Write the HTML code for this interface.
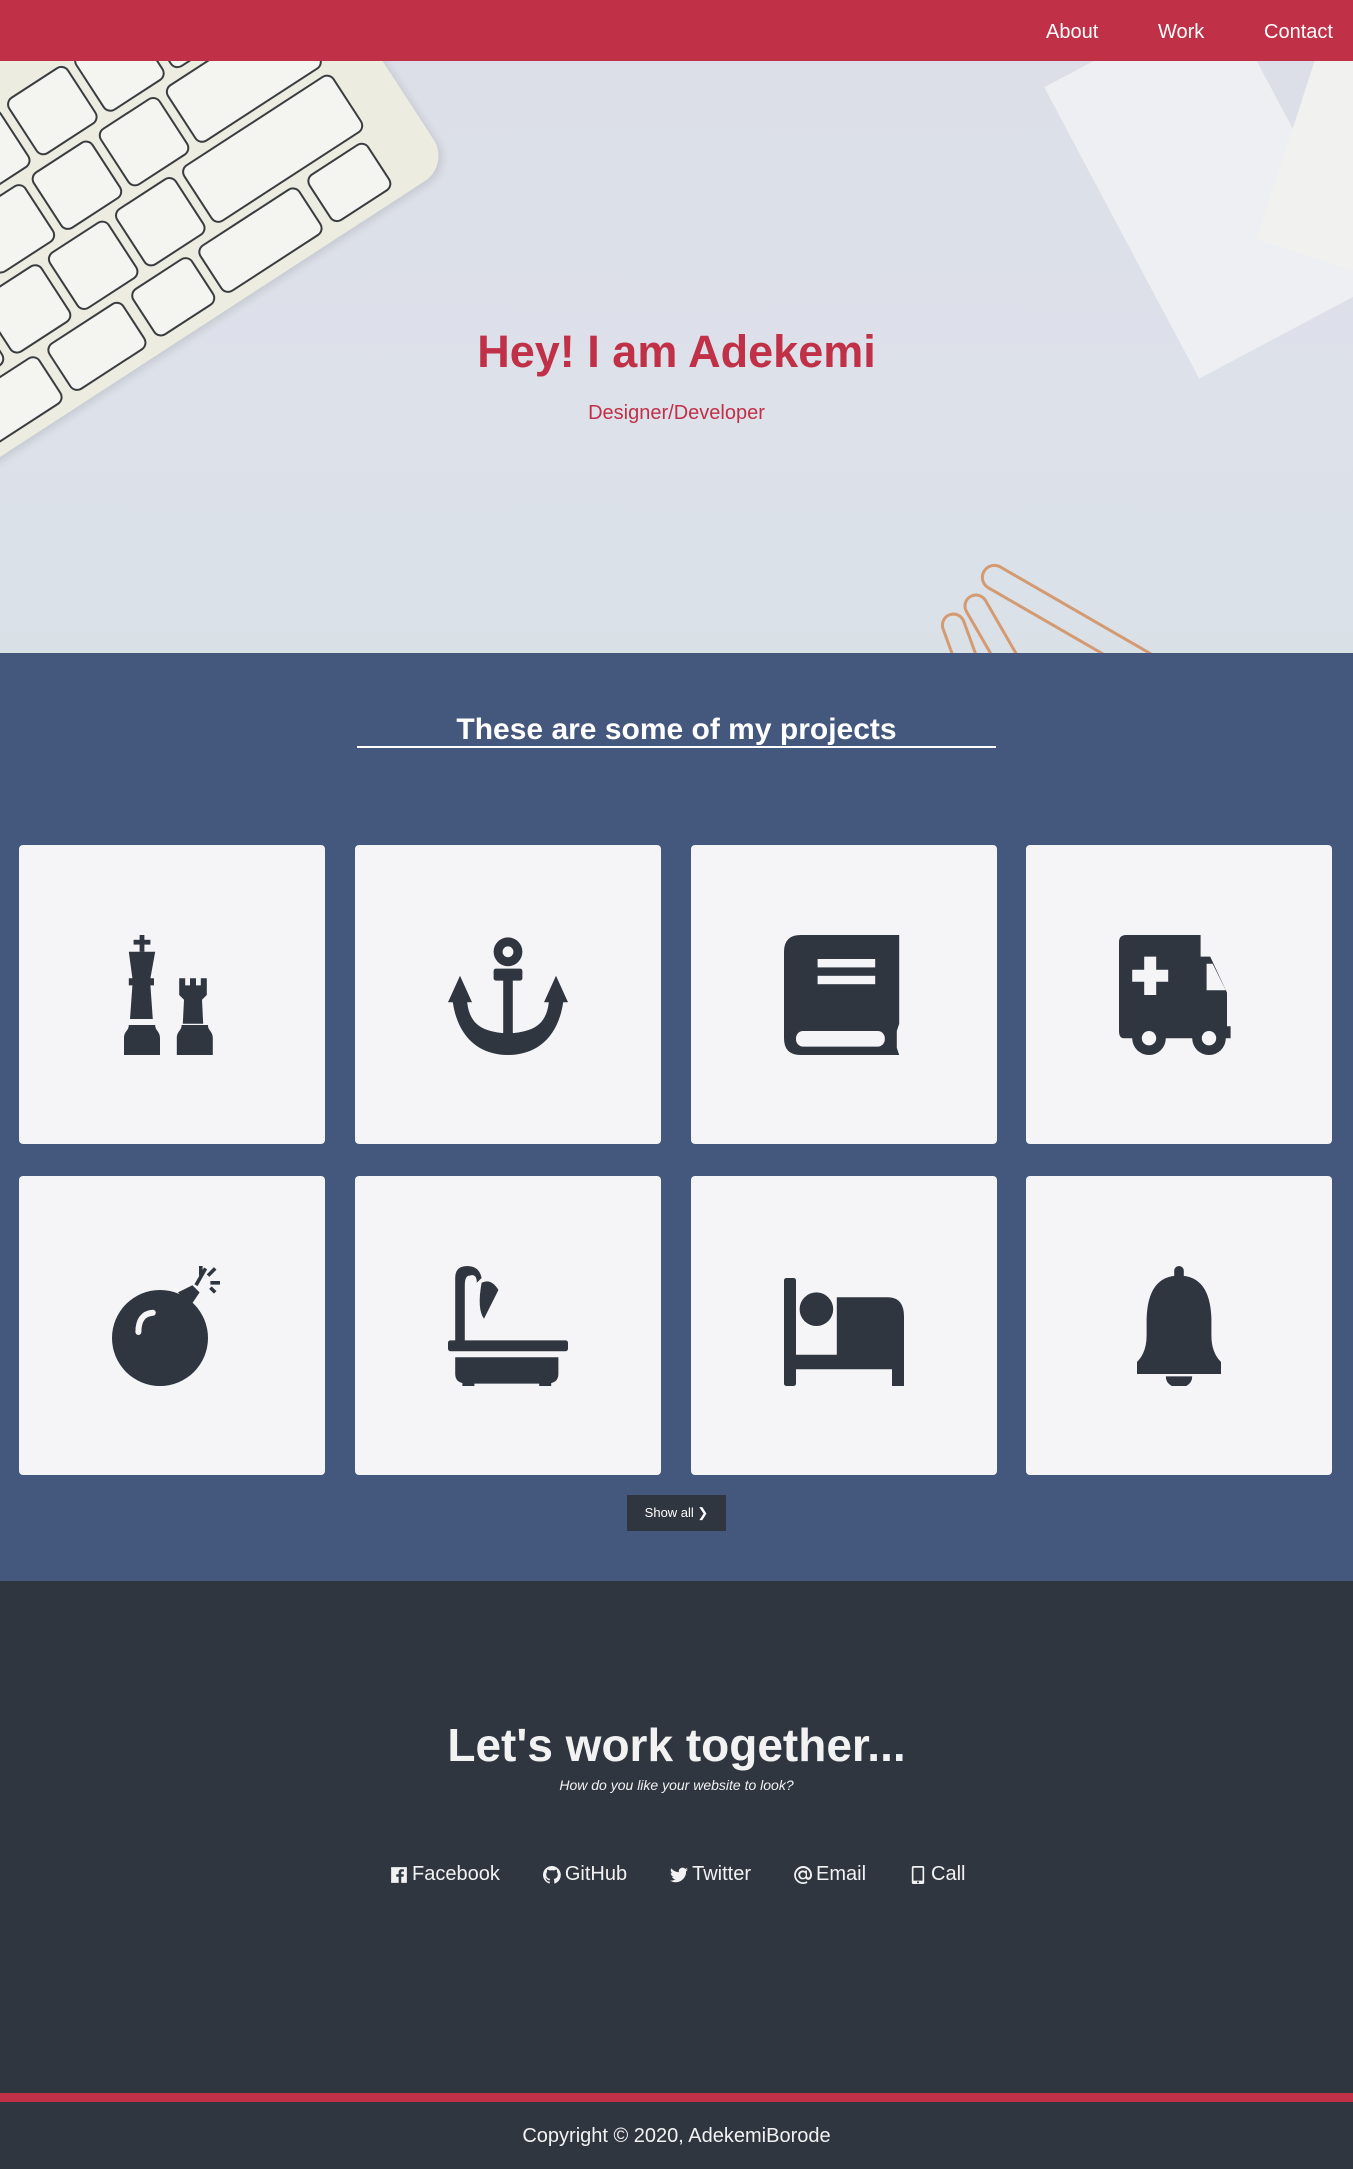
<!DOCTYPE html>
<html><head><meta charset="utf-8"><style>
*{margin:0;padding:0;box-sizing:border-box}
body{width:1353px;height:2169px;font-family:"Liberation Sans",sans-serif;background:#2f3640;position:relative;overflow:hidden}
nav{position:absolute;top:0;left:0;width:1353px;height:61px;background:#c03046;z-index:5}
nav a{position:absolute;top:21px;color:#fff;font-size:20px;text-decoration:none}
.hero{position:absolute;top:61px;left:0;width:1353px;height:592px;background:linear-gradient(180deg,#dcdfe8 0%,#dde1ea 60%,#d9e1e7 100%);overflow:hidden}
.kb{position:absolute;left:-280px;top:-200px;width:640px;height:520px;background:#ecece0;border-radius:30px;transform:rotate(-33deg);transform-origin:center;box-shadow:2px 4px 8px rgba(0,0,0,.1)}
.kb i{position:absolute;width:72px;height:68px;background:#f4f5f1;border:2px solid #3a3d40;border-radius:9px}
.paper{position:absolute;left:1110px;top:-40px;width:200px;height:330px;background:#eeeff3;transform:rotate(-28deg)}
.card2{position:absolute;left:1285px;top:0px;width:110px;height:200px;background:#f1f2ef;transform:rotate(18deg)}
h1{position:absolute;top:265px;width:1353px;text-align:center;color:#c03046;font-size:45px;font-weight:bold}
.sub{position:absolute;top:341px;width:1353px;text-align:center;color:#c03046;font-size:20px}
.proj{position:absolute;top:653px;left:0;width:1353px;height:928px;background:#44577c}
.proj h2{position:absolute;top:60px;width:1353px;text-align:center;color:#fff;font-size:30px}
.line{position:absolute;top:93px;left:357px;width:639px;height:2px;background:#fff}
.c{position:absolute;width:306px;height:299px;background:#f5f5f7;border-radius:4px}
.c svg{position:absolute;left:93px;top:90px;width:120px;height:120px}
.btn{position:absolute;left:627px;top:842px;width:99px;height:36px;background:#2f3640;color:#fff;font-size:13px;text-align:center;line-height:36px}
.lw{position:absolute;top:1718px;width:1353px;text-align:center;color:#f2f2f2;font-size:46px;font-weight:bold}
.hw{position:absolute;top:1777px;width:1353px;text-align:center;color:#f2f2f2;font-size:14px;font-style:italic}
.links{position:absolute;top:1863px;left:390px;color:#f2f2f2;font-size:20px;white-space:nowrap}
.links span{margin-right:43px;display:inline-flex;align-items:center}
.links svg{width:18px;height:18px;margin-right:4px;fill:#f2f2f2}
.red{position:absolute;top:2093px;left:0;width:1353px;height:9px;background:#c03046}
.copy{position:absolute;top:2125px;width:1353px;text-align:center;color:#f2f2f2;font-size:20px}
</style></head><body>
<nav><a style="left:1046px">About</a><a style="left:1158px">Work</a><a style="left:1264px">Contact</a></nav>
<div class="hero">
<div class="kb">
<i style="left:360px;top:300px"></i><i style="left:440px;top:300px;width:150px"></i><i style="left:280px;top:300px"></i><i style="left:200px;top:300px"></i><i style="left:120px;top:300px"></i>
<i style="left:330px;top:376px"></i><i style="left:410px;top:376px;width:180px"></i><i style="left:250px;top:376px"></i><i style="left:170px;top:376px"></i><i style="left:90px;top:376px"></i>
<i style="left:380px;top:452px;width:120px;height:56px"></i><i style="left:510px;top:452px;height:56px"></i><i style="left:300px;top:452px;height:56px"></i><i style="left:200px;top:452px;width:90px;height:56px"></i><i style="left:80px;top:452px;width:110px;height:56px"></i>
<i style="left:380px;top:224px"></i><i style="left:460px;top:224px;width:130px"></i><i style="left:300px;top:224px"></i><i style="left:220px;top:224px"></i>
</div>
<div class="paper"></div><div class="card2"></div>
<svg style="position:absolute;left:930px;top:490px" width="260" height="110" fill="none" stroke="#d49a72" stroke-width="3"><rect x="60" y="10" width="200" height="24" rx="12" transform="rotate(30 60 10)"/><rect x="50" y="40" width="170" height="22" rx="11" transform="rotate(60 50 40)"/><rect x="30" y="60" width="150" height="22" rx="11" transform="rotate(70 30 60)"/></svg>
<h1>Hey! I am Adekemi</h1>
<div class="sub">Designer/Developer</div>
</div>
<div class="proj">
<h2>These are some of my projects</h2><div class="line"></div>
<div class="c" style="left:19px;top:192px"><svg viewBox="0 0 100 100" fill="#2f3640"><rect x="23" y="0" width="4" height="14"/><rect x="18" y="4" width="14" height="4"/><path d="M14 14h22l-4 22h3v6h-3l2 28H15l2-28h-3v-6h3z"/><path d="M10 86c0-6 4-6 4-11h22c0 5 4 5 4 11v14H10z"/><path d="M56 36h5v6h4v-6h5v6h4v-6h5v14l-4 4 1 20H59l1-20-4-4z"/><path d="M54 86c0-6 4-6 4-11h22c0 5 4 5 4 11v14H54z"/></svg></div>
<div class="c" style="left:355px;top:192px"><svg viewBox="0 0 100 100" fill="#2f3640"><circle cx="50" cy="14" r="12"/><circle cx="50" cy="14" r="4.5" fill="#f5f5f7"/><rect x="38" y="28" width="24" height="10" rx="2"/><rect x="46" y="30" width="8" height="60"/><path d="M0 56l10-22 10 22h-4c2 18 12 25 34 26 22-1 32-8 34-26h-4l10-22 10 22h-4C92 84 75 100 50 100S8 84 4 56z"/></svg></div>
<div class="c" style="left:691px;top:192px"><svg viewBox="0 0 100 100" fill="#2f3640"><path d="M14 0h82v74l-2 6v14l2 6H14Q0 100 0 86V14Q0 0 14 0z"/><rect x="10" y="80" width="74" height="13" rx="6" fill="#f5f5f7"/><rect x="28" y="20" width="48" height="7" fill="#f5f5f7"/><rect x="28" y="34" width="48" height="7" fill="#f5f5f7"/></svg></div>
<div class="c" style="left:1026px;top:192px"><svg viewBox="0 0 100 100" fill="#2f3640"><path d="M6 0h62v18h8l14 30v28h3v10H4q-4 0-4-6V6Q0 0 6 0z"/><path d="M73 24h5l11 22H73z" fill="#f5f5f7"/><path d="M21 18h10v11h10v10H31v11H21V39H11V29h10z" fill="#f5f5f7"/><circle cx="25" cy="86" r="14"/><circle cx="25" cy="86" r="6" fill="#f5f5f7"/><circle cx="75" cy="86" r="14"/><circle cx="75" cy="86" r="6" fill="#f5f5f7"/></svg></div>
<div class="c" style="left:19px;top:523px"><svg viewBox="0 0 100 100" fill="#2f3640"><circle cx="40" cy="60" r="40"/><path d="M55 22l10 12 8-12-6-6z"/><path d="M22 55q0-15 12-16" stroke="#f5f5f7" stroke-width="5" fill="none" stroke-linecap="round"/><path d="M70 16l8-14M80 8l6-6M82 14h8M74 0v8M86 22l-4-4" stroke="#2f3640" stroke-width="3"/></svg></div>
<div class="c" style="left:355px;top:523px"><svg viewBox="0 0 100 100" fill="#2f3640"><path d="M6 64V10Q6 0 16 0t12 10l-4 4q0-8-6-6-4 0-4 8v48z"/><path d="M28 14q8-4 14 6L30 44q-6-8-2-30z"/><rect x="0" y="62" width="100" height="9" rx="2"/><path d="M6 76h86v14q0 8-10 8H16Q6 98 6 90z"/><rect x="12" y="90" width="10" height="10"/><rect x="76" y="90" width="10" height="10"/></svg></div>
<div class="c" style="left:691px;top:523px"><svg viewBox="0 0 100 100" fill="#2f3640"><rect x="0" y="10" width="10" height="90" rx="2"/><circle cx="27" cy="36" r="14"/><path d="M44 26h42q14 0 14 16v58H90V86H10V74h34z"/></svg></div>
<div class="c" style="left:1026px;top:523px"><svg viewBox="0 0 100 100" fill="#2f3640"><rect x="46" y="0" width="8" height="14" rx="4"/><path d="M50 8q26 0 27 36v14q0 14 8 22v10H15V80q8-8 8-22V44q1-36 27-36z"/><path d="M39 92h22q0 8-11 10-11-2-11-10z"/></svg></div>
<div class="btn">Show all &#x276F;</div>
</div>
<div class="lw">Let's work together...</div>
<div class="hw">How do you like your website to look?</div>
<div class="links">
<span><svg viewBox="0 0 16 16"><path d="M1 1h14v14h-5V9.5h2l.3-2.2H10V6c0-.7.2-1.1 1.1-1.1h1.3V3q-1-.1-2-.1C8.6 2.9 7.7 4 7.7 5.7v1.6H5.6v2.2h2.1V15H1z"/></svg>Facebook</span><span><svg viewBox="0 0 16 16"><path d="M8 0a8 8 0 0 0-2.5 15.6c.4 0 .5-.2.5-.4v-1.5c-2.2.5-2.7-1-2.7-1-.4-.9-.9-1.2-.9-1.2-.7-.5.1-.5.1-.5.8.1 1.2.8 1.2.8.7 1.2 1.9.9 2.3.7.1-.5.3-.9.5-1.1-1.8-.2-3.600-.9-3.600-4 0-.9.3-1.6.8-2.1-.1-.2-.4-1 .1-2.1 0 0 .7-.2 2.2.8a7.5 7.5 0 0 1 4 0c1.5-1 2.2-.8 2.2-.8.4 1.1.2 1.9.1 2.1.5.6.8 1.3.8 2.1 0 3.1-1.9 3.8-3.6 4 .3.3.5.8.5 1.5v2.2c0 .2.1.5.6.4A8 8 0 0 0 8 0z"/></svg>GitHub</span><span><svg viewBox="0 0 16 16"><path d="M16 3a6.6 6.6 0 0 1-1.9.5 3.3 3.3 0 0 0 1.4-1.8 6.6 6.6 0 0 1-2 .8 3.3 3.3 0 0 0-5.6 3A9.3 9.3 0 0 1 1.1 2.1a3.3 3.3 0 0 0 1 4.4 3.3 3.3 0 0 1-1.5-.4 3.3 3.3 0 0 0 2.6 3.2 3.3 3.3 0 0 1-1.5.1 3.3 3.3 0 0 0 3.1 2.3A6.6 6.6 0 0 1 0 13a9.3 9.3 0 0 0 14.3-8.3A6.7 6.7 0 0 0 16 3z"/></svg>Twitter</span><span><svg viewBox="0 0 16 16"><path d="M8 0a8 8 0 1 0 4 15l-.7-1.5A6.3 6.3 0 1 1 14.3 8c0 1.3-.6 2.3-1.5 2.3S11.5 9.4 11.5 8.5V4H10v.6A4 4 0 1 0 10.3 11c.5.8 1.4 1.3 2.5 1.3C14.6 12.3 16 10.5 16 8A8 8 0 0 0 8 0zm0 10.5a2.5 2.5 0 1 1 0-5 2.5 2.5 0 0 1 0 5z"/></svg>Email</span><span><svg viewBox="0 0 16 16"><path d="M4 0h8q1.5 0 1.5 1.5v13Q13.5 16 12 16H4q-1.5 0-1.5-1.5v-13Q2.5 0 4 0zm0 1.5V13h8V1.5zM8 13.6a.9.9 0 1 0 0 1.8.9.9 0 0 0 0-1.8z"/></svg>Call</span>
</div>
<div class="red"></div>
<div class="copy">Copyright © 2020, AdekemiBorode</div>
</body></html>
